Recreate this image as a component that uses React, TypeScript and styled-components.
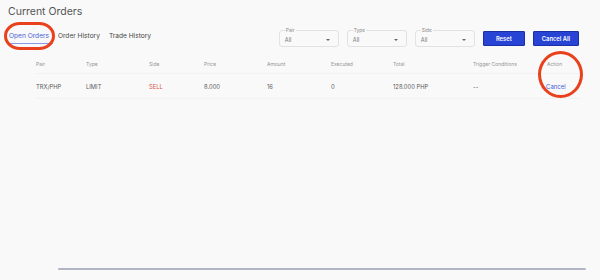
import React from 'react';
import styled, { createGlobalStyle } from 'styled-components';

const GlobalStyle = createGlobalStyle`
  html, body {
    margin: 0;
    padding: 0;
    background: #f9f9f9;
    font-family: Inter, "Liberation Sans", sans-serif;
  }
`;

type Order = {
  pair: string;
  type: string;
  side: string;
  price: string;
  amount: string;
  executed: string;
  total: string;
  trigger: string;
};

const columns = ['Pair', 'Type', 'Side', 'Price', 'Amount', 'Executed', 'Total', 'Trigger Conditions', 'Action'];

const orders: Order[] = [
  {
    pair: 'TRX/PHP',
    type: 'LIMIT',
    side: 'SELL',
    price: '8.000',
    amount: '16',
    executed: '0',
    total: '128.000 PHP',
    trigger: '--',
  },
];

const filters = ['Pair', 'Type', 'Side'];

const App: React.FC = () => {
  return (
    <Page>
      <GlobalStyle />
      <Title>Current Orders</Title>
      <Toolbar>
        <Tabs>
          <Tab $active>Open Orders</Tab>
          <Tab>Order History</Tab>
          <Tab>Trade History</Tab>
        </Tabs>
        <Filters>
          {filters.map((f) => (
            <Select key={f}>
              <SelectLabel>{f}</SelectLabel>
              <SelectValue>All</SelectValue>
              <Caret />
            </Select>
          ))}
          <Button>Reset</Button>
          <Button>Cancel All</Button>
        </Filters>
      </Toolbar>
      <Table>
        <HeadRow>
          {columns.map((c) => (
            <HeadCell key={c}>{c}</HeadCell>
          ))}
        </HeadRow>
        {orders.map((o) => (
          <Row key={o.pair}>
            <Cell>{o.pair}</Cell>
            <Cell>{o.type}</Cell>
            <Cell $sell={o.side === 'SELL'}>{o.side}</Cell>
            <Cell>{o.price}</Cell>
            <Cell>{o.amount}</Cell>
            <Cell>{o.executed}</Cell>
            <Cell>{o.total}</Cell>
            <Cell>{o.trigger}</Cell>
            <CancelLink>Cancel</CancelLink>
          </Row>
        ))}
      </Table>
      <Footer>
        <ScrollBar />
      </Footer>
      <Highlight $x={4} $y={22} $w={51} $h={28} $r="16px / 14px" />
      <Highlight $x={538} $y={51} $w={45} $h={47} $r="50%" />
    </Page>
  );
};

export default App;

const Page = styled.div`
  position: relative;
  height: 280px;
  display: flex;
  flex-direction: column;
  box-sizing: border-box;
  overflow: hidden;
`;

const Title = styled.div`
  margin: 5px 0 0 8px;
  font-size: 10.5px;
  line-height: 14px;
  color: #555;
`;

const Toolbar = styled.div`
  display: flex;
  justify-content: space-between;
  align-items: center;
  height: 24px;
  margin-top: 7px;
  padding: 0 21px 0 8px;
`;

const Tabs = styled.div`
  display: flex;
  align-self: flex-start;
  margin-top: 2px;
  height: 16px;
`;

const Tab = styled.div<{ $active?: boolean }>`
  font-size: 6.6px;
  height: 100%;
  display: flex;
  align-items: center;
  box-sizing: border-box;
  padding: 0 4px 0 1px;
  margin-right: 4px;
  color: ${(p) => (p.$active ? '#3f5bd8' : '#444')};
  box-shadow: ${(p) => (p.$active ? 'inset 0 -1px 0 #8899e6' : 'none')};
`;

const Filters = styled.div`
  display: flex;
  align-items: center;
  gap: 8px;
`;

const Select = styled.div`
  position: relative;
  width: 60px;
  height: 17px;
  border: 1px solid #e2e2e2;
  border-radius: 3px;
  box-sizing: border-box;
  display: flex;
  align-items: center;
  padding-left: 5px;
  margin-top: 1px;
`;

const SelectLabel = styled.span`
  position: absolute;
  top: -4px;
  left: 5px;
  padding: 0 1px;
  font-size: 4.8px;
  line-height: 6px;
  color: #8a8a8a;
  background: #f9f9f9;
`;

const SelectValue = styled.span`
  font-size: 5.6px;
  color: #777;
  padding-top: 2px;
`;

const Caret = styled.span`
  position: absolute;
  right: 8px;
  top: 8px;
  width: 0;
  height: 0;
  border-left: 2px solid transparent;
  border-right: 2px solid transparent;
  border-top: 2px solid #666;
`;

const Button = styled.div`
  height: 15px;
  padding: 0 8px;
  min-width: 42px;
  box-sizing: border-box;
  display: flex;
  align-items: center;
  justify-content: center;
  background: #2744d4;
  border: 1px solid #1a30a6;
  border-radius: 1px;
  color: #fff;
  font-size: 5.8px;
  font-weight: 600;
`;

const Table = styled.div`
  margin-top: 5px;
  padding: 0 18px 0 36px;
`;

const grid = `
  display: grid;
  grid-template-columns: 50px 63px 55px 63px 64px 62px 80px 74px 1fr;
  align-items: center;
`;

const HeadRow = styled.div`
  ${grid}
  height: 18px;
  border-bottom: 1px solid #f2f2f2;
`;

const HeadCell = styled.div`
  font-size: 5px;
  color: #959595;
`;

const Row = styled.div`
  ${grid}
  height: 24px;
  border-bottom: 1px solid #f2f2f2;
`;

const Cell = styled.div<{ $sell?: boolean }>`
  font-size: 5.8px;
  color: ${(p) => (p.$sell ? '#d9534f' : '#5a5a5a')};
`;

const CancelLink = styled.div`
  font-size: 6px;
  color: #3f5bd8;
  margin-left: -1px;
`;

const Footer = styled.div`
  margin-top: auto;
  padding: 0 14px 10px 58px;
`;

const ScrollBar = styled.div`
  height: 2px;
  background: #b0b6c3;
  border-radius: 1px;
`;

const Highlight = styled.div<{ $x: number; $y: number; $w: number; $h: number; $r: string }>`
  position: absolute;
  left: ${(p) => p.$x}px;
  top: ${(p) => p.$y}px;
  width: ${(p) => p.$w}px;
  height: ${(p) => p.$h}px;
  border: 3px solid #e8411c;
  border-radius: ${(p) => p.$r};
  box-sizing: border-box;
  pointer-events: none;
`;
